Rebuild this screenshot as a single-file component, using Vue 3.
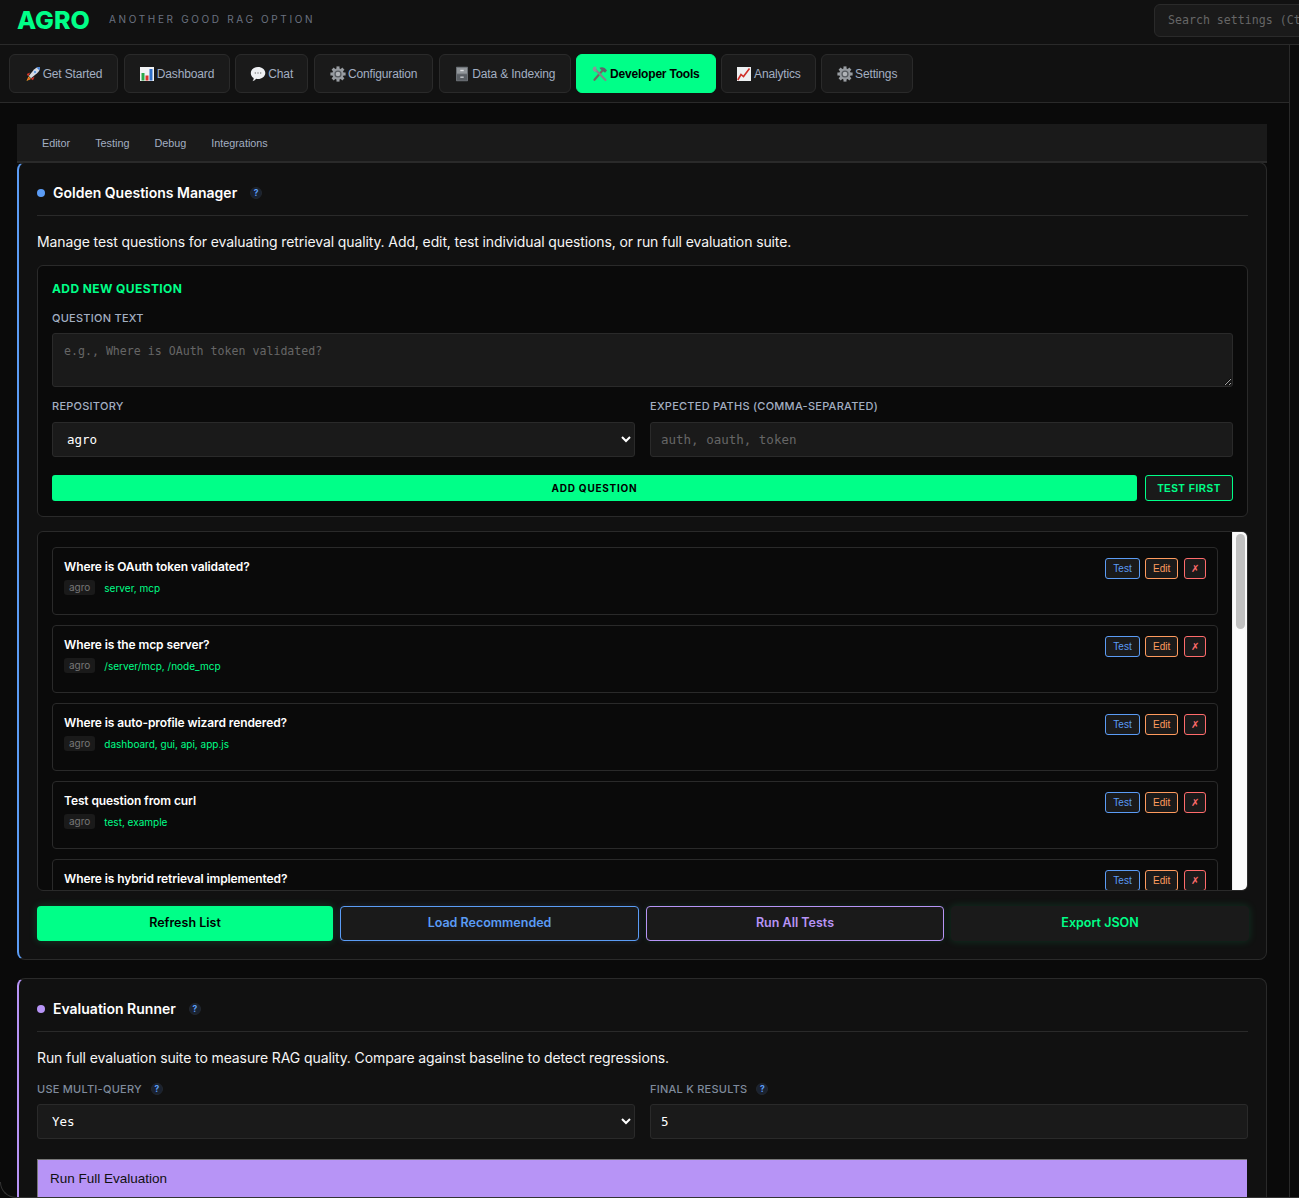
<script setup>
const tabs = [
  { id: 'rocket', label: 'Get Started', width: 109 },
  { id: 'bars', label: 'Dashboard', width: 106 },
  { id: 'bubble', label: 'Chat', width: 73.4 },
  { id: 'gear', label: 'Configuration', width: 119.6 },
  { id: 'cabinet', label: 'Data & Indexing', width: 131.6 },
  { id: 'tools', label: 'Developer Tools', width: 139.5 },
  { id: 'trend', label: 'Analytics', width: 94.6 },
  { id: 'gear', label: 'Settings', width: 92 }
]
tabs[5].active = true
const subtabs = ['Editor', 'Testing', 'Debug', 'Integrations']
const questions = [
  { q: 'Where is OAuth token validated?', paths: 'server, mcp' },
  { q: 'Where is the mcp server?', paths: '/server/mcp, /node_mcp' },
  { q: 'Where is auto-profile wizard rendered?', paths: 'dashboard, gui, api, app.js' },
  { q: 'Test question from curl', paths: 'test, example' },
  { q: 'Where is hybrid retrieval implemented?', paths: '' }
]
const gearTeeth = [0, 45, 90, 135, 180, 225, 270, 315]
</script>

<template>
  <div class="app">
    <header class="topbar">
      <div class="logo">AGRO</div>
      <div class="tagline">ANOTHER GOOD RAG OPTION</div>
      <input class="search" placeholder="Search settings (Ctrl+K)" />
    </header>
    <div class="body">
      <div class="main">
        <nav class="tabs">
          <button v-for="t in tabs" :key="t.label" class="tab" :class="{ active: t.active }" :style="{ width: t.width + 'px' }">
            <svg class="emoji" viewBox="0 0 16 16">
              <template v-if="t.id === 'rocket'">
                <path d="M3.5 10.5 1.5 15l4.5-2z" fill="#f5a623" />
                <path d="M3.6 11.8 2.8 14l2.2-1z" fill="#e8402a" />
                <path d="M5.2 6.500 1.800 8l1.400 2.400zM9.500 10.800l-1.500 3.400-2.400-1.400z" fill="#d8352a" />
                <path d="M3.800 10 9 3.600C10.600 1.800 13 1 15 1c0 2-.8 4.400-2.600 6L6 12.200z" fill="#d5d9df" />
                <path d="M11.500 1.600C12.600 1.200 14 1 15 1c0 1-.2 2.400-.6 3.500z" fill="#3f7fd9" />
                <circle cx="10" cy="6" r="1.500" fill="#4a90d9" stroke="#eef" stroke-width=".6" />
              </template>
              <template v-else-if="t.id === 'bars'">
                <rect x="1" y="1" width="14" height="14" fill="#f2f3f5" />
                <rect x="2.500" y="7" width="3" height="7.500" fill="#2aa84a" />
                <rect x="6.500" y="9.500" width="3" height="5" fill="#d8342c" />
                <rect x="10.500" y="3" width="3" height="11.500" fill="#2f6fc9" />
              </template>
              <template v-else-if="t.id === 'bubble'">
                <path d="M8 1c3.900 0 7.300 2.600 7.300 6s-3.400 6-7.300 6c-.6 0-1.200-.1-1.800-.2C5.200 14 3.800 14.900 2.500 15.200c.8-.9 1.200-2 1.200-3.100C1.900 11 .8 9.100.8 7 .8 3.600 4.100 1 8 1z" fill="#eef0f3" />
                <circle cx="5.300" cy="7" r=".7" fill="#777" />
                <circle cx="8" cy="7" r=".7" fill="#777" />
                <circle cx="10.700" cy="7" r=".7" fill="#777" />
              </template>
              <template v-else-if="t.id === 'gear'">
                <g fill="#9a9ea3">
                  <rect v-for="a in gearTeeth" :key="a" x="6.500" y=".4" width="3" height="3.200" :transform="`rotate(${a} 8 8)`" />
                </g>
                <circle cx="8" cy="8" r="5.700" fill="#969a9f" />
                <circle cx="8" cy="8" r="3.600" fill="#55595e" />
                <circle cx="8" cy="8" r="2.300" fill="#b1b4b8" />
              </template>
              <template v-else-if="t.id === 'cabinet'">
                <rect x="2" y=".8" width="12" height="14.400" rx=".6" fill="#6a6f74" />
                <rect x="3" y="1.800" width="10" height="5.800" fill="#92979b" />
                <rect x="3" y="8.500" width="10" height="5.800" fill="#5a5f64" />
                <rect x="6.300" y="3.800" width="3.400" height="1.400" fill="#e0e2e4" />
                <rect x="6.300" y="10.500" width="3.400" height="1.400" fill="#c4c7ca" />
              </template>
              <template v-else-if="t.id === 'tools'">
                <path d="M2.500 13.800 10.500 4.500" stroke="#6f6a62" stroke-width="2.200" stroke-linecap="round" />
                <path d="M3.500 3.800 13.500 14" stroke="#82878c" stroke-width="2.200" stroke-linecap="round" />
                <path d="M7.500 1.800C10 .4 13 1.200 15 4.500l-2 2.200-5-4z" fill="#5f6469" />
                <path d="M1.300 1.300 3.300 3.300 4.800 2 3.500.5C1.800.3.400 1.800.7 3.800L2.500 6l2.500-1.500z" fill="#8f9499" />
              </template>
              <template v-else>
                <rect x="1" y="1" width="14" height="14" fill="#eef0f2" />
                <path d="M1.800 14 5 8.500l2.500 2L13.500 2.500" fill="none" stroke="#cf2f2a" stroke-width="1.600" />
              </template>
            </svg>
            <span>{{ t.label }}</span>
          </button>
        </nav>
        <main class="content">
          <div class="subtabs">
            <span v-for="s in subtabs" :key="s" class="subtab">{{ s }}</span>
          </div>

          <section class="card blue">
            <div class="card-title">
              <i class="dot"></i>
              <h3>Golden Questions Manager</h3>
              <span class="help">?</span>
            </div>
            <p class="desc">Manage test questions for evaluating retrieval quality. Add, edit, test individual questions, or run full evaluation suite.</p>

            <div class="add-box">
              <h4>ADD NEW QUESTION</h4>
              <label class="lbl">QUESTION TEXT</label>
              <textarea class="field area" placeholder="e.g., Where is OAuth token validated?"></textarea>
              <div class="two repo-row">
                <div>
                  <label class="lbl">REPOSITORY</label>
                  <select class="field select"><option>agro</option></select>
                </div>
                <div>
                  <label class="lbl">EXPECTED PATHS (COMMA-SEPARATED)</label>
                  <input class="field input" placeholder="auth, oauth, token" />
                </div>
              </div>
              <div class="add-actions">
                <button class="add-btn">ADD QUESTION</button>
                <button class="first-btn">TEST FIRST</button>
              </div>
            </div>

            <div class="list">
              <div class="list-scroll">
                <article v-for="item in questions" :key="item.q" class="question">
                  <div class="q-main">
                    <div class="q-text">{{ item.q }}</div>
                    <div v-if="item.paths" class="q-meta">
                      <span class="repo">agro</span>
                      <span class="paths">{{ item.paths }}</span>
                    </div>
                  </div>
                  <div class="q-actions">
                    <button class="mini m-blue">Test</button>
                    <button class="mini m-orange">Edit</button>
                    <button class="mini m-red">✗</button>
                  </div>
                </article>
              </div>
              <div class="scrollbar"><div class="thumb"></div></div>
            </div>

            <div class="row-actions">
              <button class="act act-green">Refresh List</button>
              <button class="act act-blue">Load Recommended</button>
              <button class="act act-purple">Run All Tests</button>
              <button class="act act-dark">Export JSON</button>
            </div>
          </section>

          <section class="card purple">
            <div class="card-title">
              <i class="dot"></i>
              <h3>Evaluation Runner</h3>
              <span class="help">?</span>
            </div>
            <p class="desc">Run full evaluation suite to measure RAG quality. Compare against baseline to detect regressions.</p>
            <div class="two eval">
              <div>
                <label class="lbl dim">USE MULTI-QUERY <span class="help small">?</span></label>
                <select class="field select"><option>Yes</option></select>
              </div>
              <div>
                <label class="lbl dim">FINAL K RESULTS <span class="help small">?</span></label>
                <input class="field input value" value="5" />
              </div>
            </div>
            <button class="run">Run Full Evaluation</button>
          </section>
        </main>
      </div>
      <aside class="rail"></aside>
    </div>
    <div class="window-edge"></div>
  </div>
</template>

<style>
html, body { margin: 0; background: #0a0a0a; overflow: hidden; }
</style>

<style scoped>
.app { position: relative; width: 1299px; height: 1198px; overflow: hidden; background: #0a0a0a; color: #fff; font-family: Inter, "Liberation Sans", sans-serif; }
button, input, textarea, select { box-sizing: border-box; margin: 0; }

.topbar { height: 45px; box-sizing: border-box; background: #111; border-bottom: 1px solid #2a2a2a; display: flex; align-items: center; padding-left: 17px; position: relative; overflow: hidden; }
.logo { font-size: 25px; line-height: 40px; font-weight: 800; color: #00ff88; width: 92px; margin-top: -4px; }
.tagline { font-size: 10px; letter-spacing: 2.65px; color: #6b7280; margin-top: -6px; white-space: nowrap; }
.search { position: absolute; left: 1154px; top: 4px; width: 300px; height: 33px; background: #1a1a1a; border: 1px solid #2a2a2a; border-radius: 6px; padding: 0 13px 2px; font: 11.6px "DejaVu Sans Mono", monospace; color: #ccc; outline: none; }
.search::placeholder { color: #666; }

.body { display: flex; height: 1153px; }
.main { width: 1289px; flex: none; }
.rail { width: 10px; flex: none; border-left: 1px solid #2a2a2a; box-sizing: border-box; background: #0a0a0a; }

.tabs { height: 58px; box-sizing: border-box; background: #111; border-bottom: 1px solid #2a2a2a; display: flex; align-items: flex-start; gap: 5.5px; padding: 9px 0 0 9px; }
.tab { height: 39px; flex: none; display: flex; align-items: center; justify-content: center; gap: 2px; padding: 0; background: #1a1a1a; border: 1px solid #2a2a2a; border-radius: 6px; color: #a3afc2; font: 12px "Liberation Sans", Arial, sans-serif; letter-spacing: -.15px; white-space: nowrap; }
.tab.active { background: #00ff88; border-color: #00ff88; color: #000; font-weight: 700; letter-spacing: -.2px; }
.emoji { width: 16px; height: 16px; flex: none; }

.content { padding: 21px 22px 0 17px; }
.subtabs { height: 39px; box-sizing: border-box; background: #1a1a1a; border-bottom: 2px solid #2a2a2a; display: flex; align-items: center; gap: 25px; padding-left: 25px; }
.subtab { font: 10.8px "Liberation Sans", Arial, sans-serif; color: #a3afc2; }

.card { background: #111; border: 1px solid #2a2a2a; border-radius: 8px; padding: 20px 18px 18px; box-sizing: border-box; }
.card.blue { border-left: 2px solid #5b9cf5; height: 798px; margin-top: -1px; }
.card.purple { border-left: 2px solid #b794f6; margin-top: 18px; height: 400px; padding-bottom: 0; }
.card-title { height: 32px; border-bottom: 1px solid #2a2a2a; display: flex; align-items: flex-start; margin-bottom: 17px; }
.dot { width: 8px; height: 8px; border-radius: 50%; background: #5b9cf5; margin: 6px 8px 0 0; flex: none; }
.purple .dot { background: #b794f6; }
.card-title h3 { margin: 0; font-size: 14px; line-height: 20px; font-weight: 600; color: #fff; }
.help { width: 12px; height: 12px; border-radius: 50%; background: #1a2230; border: 1px solid #22272f; box-sizing: border-box; color: #5b9cf5; font-size: 8.5px; font-weight: 700; display: inline-flex; align-items: center; justify-content: center; margin: 4px 0 0 13px; }
.help.small { margin: 0 0 0 9px; }
.desc { margin: 0 0 14px; font-size: 14px; line-height: 18px; letter-spacing: -.11px; color: #f5f5f5; }

.add-box { height: 252px; box-sizing: border-box; background: #0a0a0a; border: 1px solid #2a2a2a; border-radius: 6px; padding: 15px 14px; }
.add-box h4 { margin: 0 0 14px; font-size: 12px; line-height: 16px; letter-spacing: .4px; font-weight: 700; color: #00ff88; }
.lbl { display: block; font-size: 11px; line-height: 14px; letter-spacing: .25px; font-weight: 500; color: #a3afc2; margin-bottom: 8px; }
.repo-row .lbl { margin-bottom: 9px; }
.lbl.dim { color: #7f8b9c; }
.field { display: block; width: 100%; background: #1a1a1a; border: 1px solid #2a2a2a; border-radius: 3px; color: #fff; outline: none; }
.area { height: 54px; padding: 9px 11px; font: 11.6px/16px "DejaVu Sans Mono", monospace; resize: vertical; margin-bottom: 12px; }
.area::placeholder, .input::placeholder { color: #666; }
.two { display: grid; grid-template-columns: 583px 583px; gap: 15px; }
.select { height: 35px; padding: 0 10px; font: 12.5px "DejaVu Sans Mono", monospace; color: #fff; }
.input { height: 35px; padding: 0 10px; font: 12.5px "DejaVu Sans Mono", monospace; }
.add-actions { display: flex; gap: 8px; margin-top: 18px; }
.add-btn { flex: 1; height: 26px; background: #00ff88; color: #000; border: 0; border-radius: 3px; font: 700 10px Inter, sans-serif; letter-spacing: .75px; }
.first-btn { width: 88px; height: 26px; background: #1a1a1a; color: #00ff88; border: 1px solid #00ff88; border-radius: 3px; font: 700 10px "Liberation Sans", sans-serif; letter-spacing: .6px; }

.list { position: relative; height: 360px; box-sizing: border-box; margin-top: 14px; background: #0a0a0a; border: 1px solid #2a2a2a; border-radius: 6px; overflow: hidden; }
.list-scroll { padding: 15px 29px 0 14px; }
.question { height: 68px; box-sizing: border-box; margin-bottom: 10px; background: #0a0a0a; border: 1px solid #2a2a2a; border-radius: 4px; padding: 10px 11px 0; display: flex; justify-content: space-between; }
.q-text { font-size: 12px; line-height: 16px; letter-spacing: -.1px; font-weight: 600; color: #fff; margin-top: 1px; }
.q-meta { display: flex; align-items: center; gap: 9px; margin-top: 5px; }
.repo { background: #1a1a1a; color: #777; font-size: 10px; line-height: 15px; padding: 0 5px; border-radius: 3px; }
.paths { font-size: 10px; color: #00ff88; }
.q-actions { display: flex; gap: 5px; }
.mini { height: 21px; padding: 0 7px; background: #1a1a1a; border-radius: 3px; font: 10px "Liberation Sans", sans-serif; border: 1px solid; }
.m-blue { width: 35px; color: #5b9cf5; border-color: #5b9cf5; }
.m-orange { width: 33px; color: #ff9b5e; border-color: #ff9b5e; margin-right: 1px; }
.m-red { width: 22px; color: #ff6b6b; border-color: #ff6b6b; padding: 0; }
.scrollbar { position: absolute; right: 0; top: 0; bottom: 0; width: 15px; background: #fafafa; border-left: 1px solid #eee; box-sizing: border-box; }
.thumb { position: absolute; left: 3px; top: 2px; width: 9px; height: 95px; border-radius: 5px; background: #c1c1c1; }

.row-actions { display: grid; grid-template-columns: 296px 299px 298px 298px; gap: 7px; margin-top: 15px; }
.act { height: 35px; padding: 0 0 2px; border-radius: 4px; font-family: Inter, sans-serif; font-size: 12.5px; font-weight: 600; background: #1a1a1a; border: 1px solid transparent; }
.act-green { background: #00ff88; color: #000; box-shadow: 0 0 8px rgba(0,255,136,.2); }
.act-blue { color: #5b9cf5; border-color: #5b9cf5; box-shadow: 0 0 6px rgba(91,156,245,.15); }
.act-purple { color: #b794f6; border-color: #b794f6; box-shadow: 0 0 6px rgba(0,255,136,.1); }
.act-dark { color: #00ff88; border-color: #1a1a1a; box-shadow: 0 0 8px rgba(0,255,136,.15); }

.eval { grid-template-columns: 598px 598px; gap: 15px; }
.purple .desc { margin-bottom: 15px; }
.eval .lbl { display: flex; align-items: center; }
.run { display: block; width: 1210px; height: 60px; margin-top: 20px; text-align: left; padding: 0 0 22px 12px; background: #b794f6; color: #111; border: 0; border-top: 1px solid #777; border-left: 1px solid #777; font: 13.5px "Liberation Sans", sans-serif; }

.window-edge { position: absolute; left: 0; right: 0; bottom: 0; height: 16px; box-sizing: border-box; border-left: 1px solid #333; border-bottom: 1px solid #333; border-bottom-left-radius: 16px; pointer-events: none; }
</style>
